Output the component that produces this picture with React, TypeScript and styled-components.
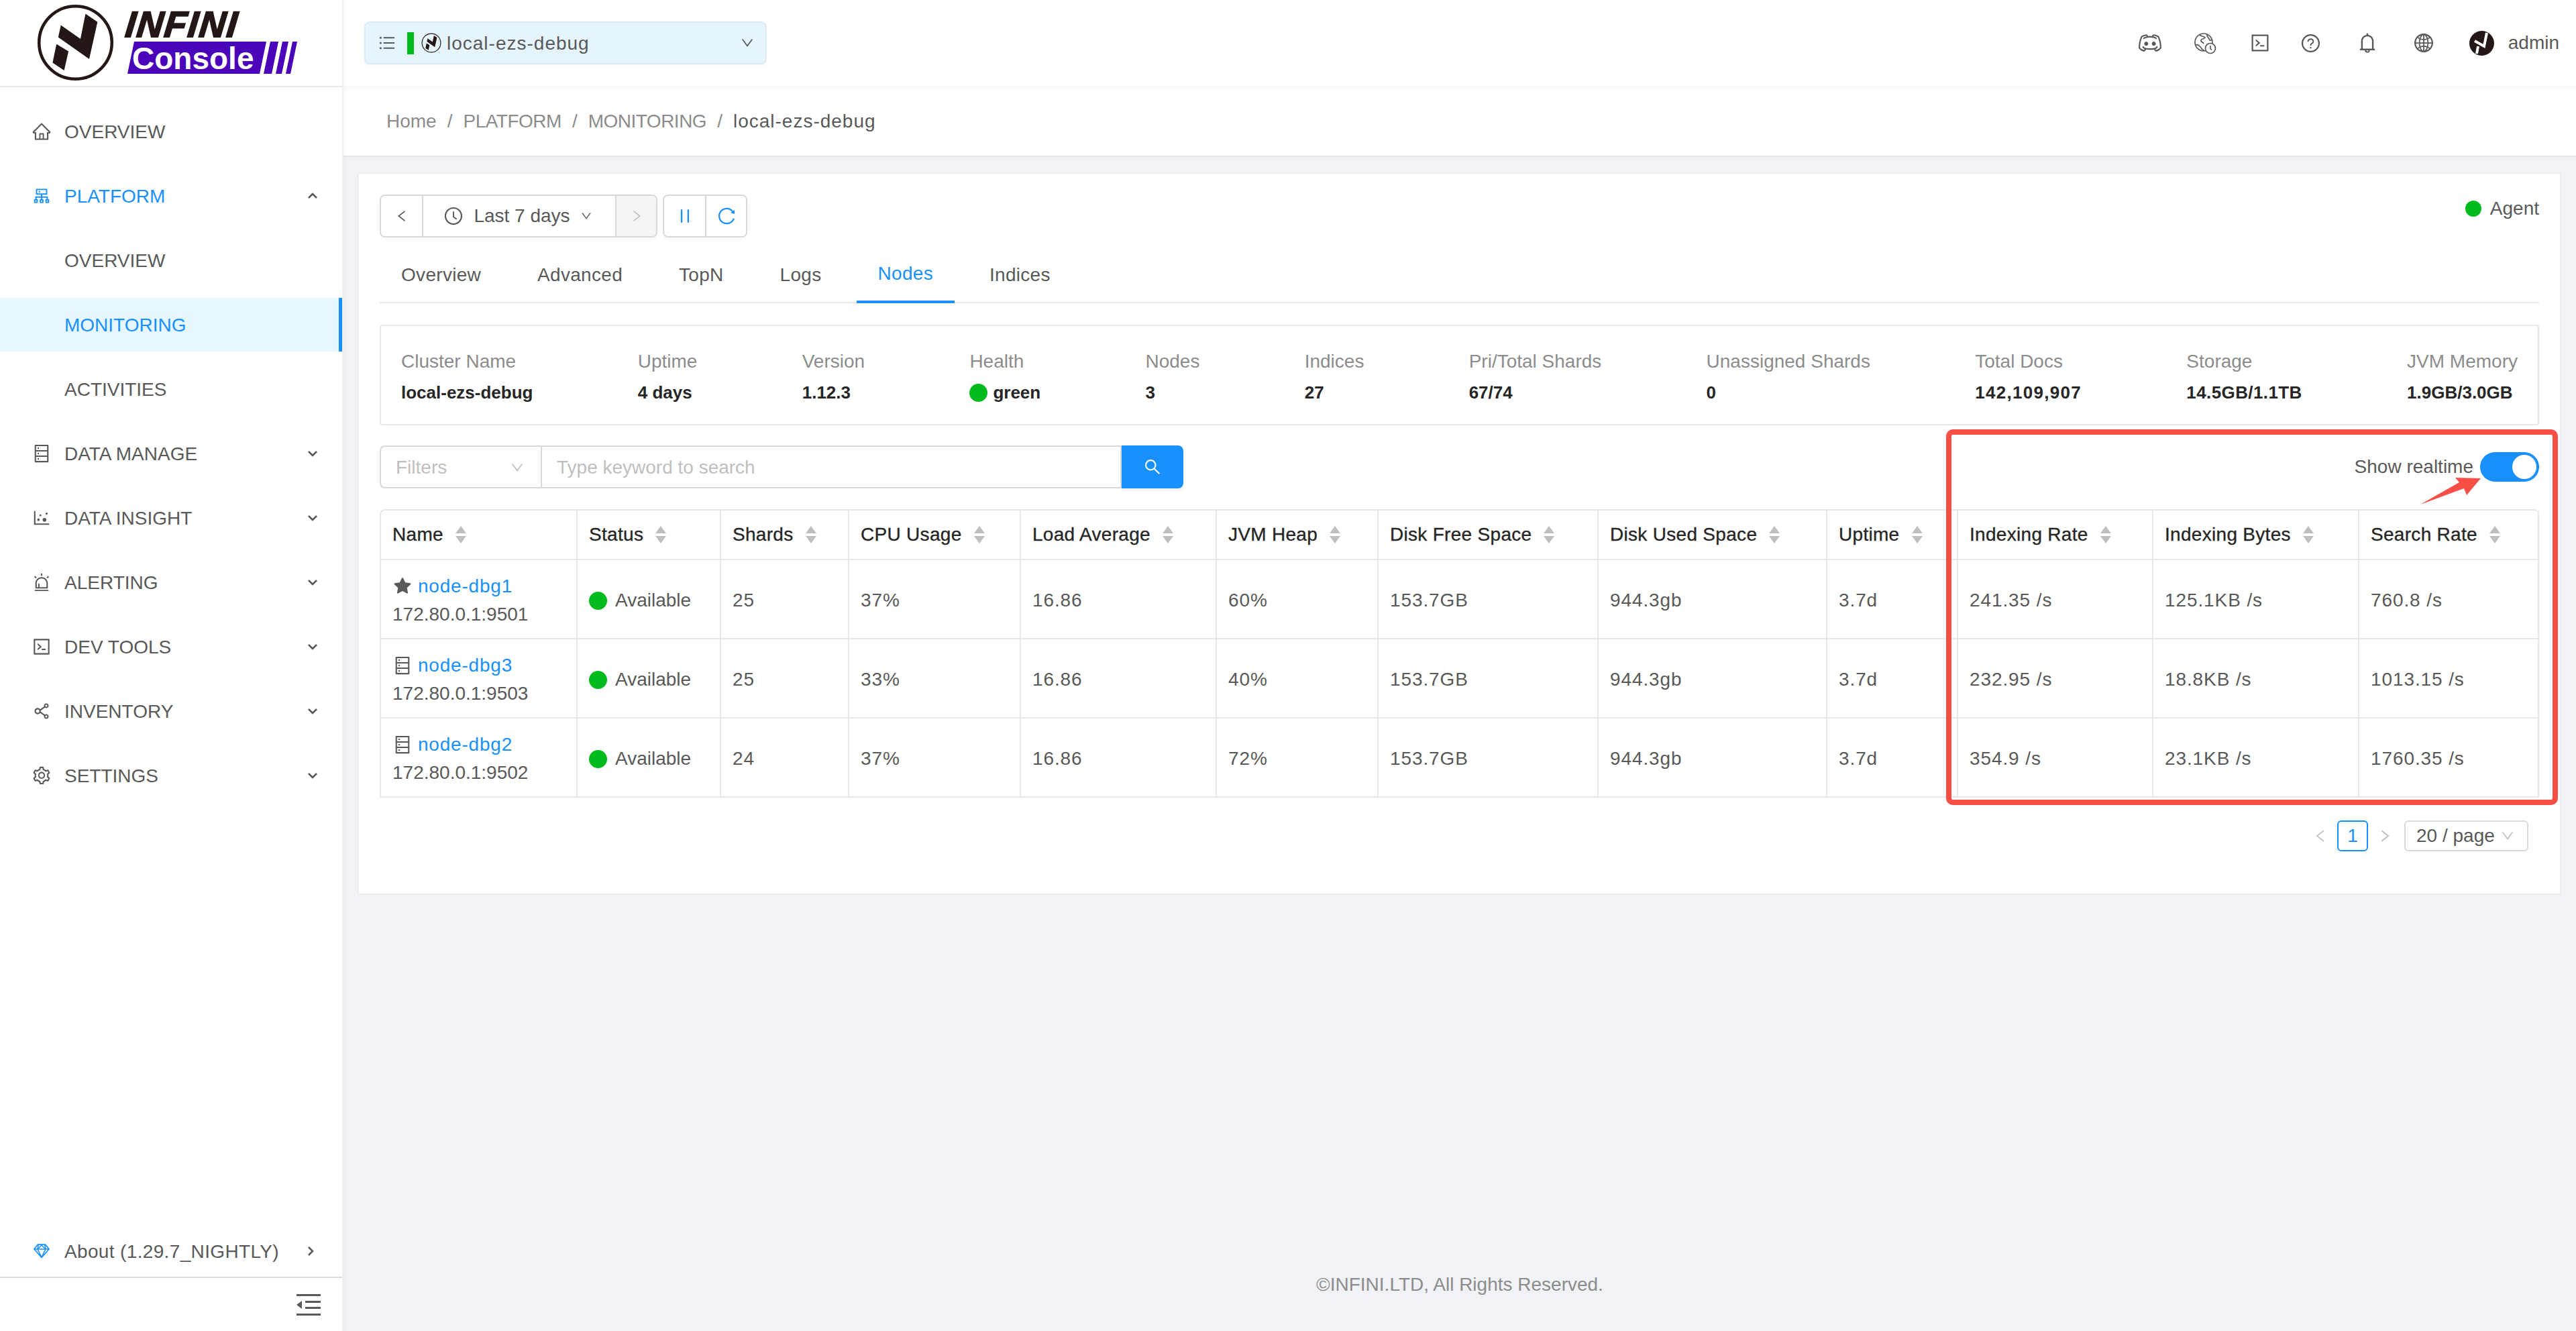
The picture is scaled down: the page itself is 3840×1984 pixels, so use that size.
import React from "react";
import styled, { createGlobalStyle } from "styled-components";
import {
  AiFillStar,
  AiOutlineAlert,
  AiOutlineBell,
  AiOutlineClockCircle,
  AiOutlineCluster,
  AiOutlineCode,
  AiOutlineDatabase,
  AiOutlineDotChart,
  AiOutlineDown,
  AiOutlineGlobal,
  AiOutlineHome,
  AiOutlineLeft,
  AiOutlinePause,
  AiOutlineQuestionCircle,
  AiOutlineReload,
  AiOutlineRight,
  AiOutlineSearch,
  AiOutlineSetting,
  AiOutlineShareAlt,
  AiOutlineSketch,
  AiOutlineUnorderedList,
} from "react-icons/ai";
import { RxDiscordLogo } from "react-icons/rx";

const GlobalStyle = createGlobalStyle`
  html, body {
    margin: 0;
    padding: 0;
    background: #f0f2f5;
  }
  body {
    font-family: "Liberation Sans", Arial, sans-serif;
    font-size: 28px;
    line-height: 42px;
    color: #595959;
  }
  * {
    box-sizing: border-box;
  }
`;

const Page = styled.div`
  display: flex;
  width: 3840px;
  height: 1984px;
  overflow: hidden;
`;

const Sidebar = styled.aside`
  display: flex;
  flex-direction: column;
  flex: 0 0 512px;
  background: #fff;
  border-right: 2px solid #f0f0f0;
  box-shadow: 2px 0 6px rgba(0, 21, 41, 0.035);
  z-index: 2;
`;

const LogoBar = styled.div`
  display: flex;
  gap: 15px;
  height: 130px;
  padding: 5px 0 0 54px;
  border-bottom: 2px solid #e8e8e8;
`;

const LogoWords = styled.div`
  display: flex;
  flex-direction: column;
`;

const LogoInfini = styled.div`
  height: 54px;
  margin-left: 2px;
  padding-top: 4px;
  font-size: 54px;
  line-height: 54px;
  font-weight: 700;
  font-style: italic;
  letter-spacing: 2px;
  color: #231815;
  -webkit-text-stroke: 2px #231815;
  transform: skewX(-6deg);
`;

const LogoBand = styled.div`
  display: flex;
  align-items: center;
  gap: 6px;
  height: 48px;
  margin: 3px 0 0 4px;
`;

const ConsoleWord = styled.div`
  flex: none;
  width: 207px;
  height: 48px;
  padding-left: 7px;
  background: #4a03b9;
  color: #fff;
  font-size: 46px;
  line-height: 50px;
  font-weight: 700;
  clip-path: polygon(10px 0, 100% 0, 197px 100%, 0 100%);
`;

const Stripe = styled.span<{ $w: number }>`
  display: block;
  flex: none;
  width: ${(p) => p.$w + 10}px;
  height: 48px;
  margin-left: -10px;
  background: #4a03b9;
  clip-path: polygon(10px 0, 100% 0, calc(100% - 10px) 100%, 0 100%);
`;

const Menu = styled.nav`
  flex: 1;
  padding-top: 26px;
`;

const MenuRow = styled.a<{ $active?: boolean; $open?: boolean; $sub?: boolean }>`
  display: flex;
  align-items: center;
  height: 80px;
  margin-bottom: 16px;
  padding-left: ${(p) => (p.$sub ? "96px" : "47px")};
  padding-right: 37px;
  gap: 19px;
  color: ${(p) => (p.$active || p.$open ? "#1890ff" : "#595959")};
  background: ${(p) => (p.$active ? "#e6f7ff" : "transparent")};
  border-right: ${(p) => (p.$active ? "5px solid #1890ff" : "none")};
  svg.menu-icon {
    flex: none;
    font-size: 30px;
  }
`;

const MenuLabel = styled.span`
  flex: 1;
  padding-top: 2px;
`;

const ArrowSvg = styled.svg<{ $dir: "up" | "down" | "right" }>`
  width: 14px;
  height: 14px;
  flex: none;
  fill: none;
  stroke: #595959;
  stroke-width: 2.6;
  transform: rotate(
    ${(p) => (p.$dir === "up" ? 180 : p.$dir === "right" ? -90 : 0)}deg
  );
`;

const AboutRow = styled.div`
  display: flex;
  align-items: center;
  gap: 19px;
  height: 78px;
  padding: 0 40px 0 47px;
  border-bottom: 2px solid #d9d9d9;
  letter-spacing: 0.35px;
  svg.about-icon {
    flex: none;
    font-size: 30px;
    color: #1890ff;
  }
`;

const CollapseRow = styled.div`
  display: flex;
  align-items: center;
  justify-content: flex-end;
  height: 79px;
  padding-right: 32px;
`;

const Content = styled.div`
  display: flex;
  flex-direction: column;
  flex: 1;
  min-width: 0;
`;

const TopBar = styled.header`
  display: flex;
  align-items: center;
  justify-content: space-between;
  height: 128px;
  padding: 0 25px 0 31px;
  background: #fff;
  box-shadow: 0 2px 8px rgba(0, 0, 0, 0.05);
  z-index: 1;
`;

const ClusterSelect = styled.div`
  display: flex;
  align-items: center;
  width: 600px;
  height: 64px;
  padding: 0 16px 0 18px;
  background: #e6f4fd;
  border: 2px solid #dcecf7;
  border-radius: 8px;
  box-shadow: 0 4px 0 rgba(0, 0, 0, 0.015);
  svg.list-icon {
    font-size: 28px;
    flex: none;
  }
`;

const HealthBar = styled.span`
  width: 10px;
  height: 33px;
  margin: 0 11px 0 16px;
  background: #00bb1b;
  flex: none;
`;

const SelectLabel = styled.span`
  flex: 1;
  margin-left: 8px;
  padding-top: 2px;
  letter-spacing: 1px;
`;

const TopActions = styled.div`
  display: flex;
  align-items: center;
  color: #595959;
`;

const TopIcon = styled.span<{ $w: number; $size: number }>`
  display: flex;
  align-items: center;
  justify-content: center;
  width: ${(p) => p.$w}px;
  font-size: ${(p) => p.$size}px;
`;

const UserName = styled.span`
  margin-left: 21px;
`;

const AvatarSvg = styled.svg`
  display: block;
  width: 37px;
  height: 37px;
  margin-left: 33px;
`;

const Breadcrumb = styled.div`
  display: flex;
  align-items: center;
  height: 106px;
  padding-left: 64px;
  padding-top: 2px;
  background: #fff;
  border-bottom: 2px solid #e8e8e8;
  color: #8c8c8c;
`;

const CrumbCaps = styled.span`
  letter-spacing: -0.5px;
`;

const CrumbSep = styled.span`
  margin: 0 16px;
`;

const CrumbCurrent = styled.span`
  color: #595959;
  letter-spacing: 1px;
`;

const Main = styled.main`
  flex: 1;
  padding: 23px 22px 0 21px;
`;

const Card = styled.section`
  position: relative;
  height: 1077px;
  padding: 31px 31px 0;
  background: #fff;
  border: 2px solid #ebedf0;
  border-radius: 4px;
`;

const ToolRow = styled.div`
  display: flex;
  justify-content: space-between;
  height: 64px;
`;

const ToolGroups = styled.div`
  display: flex;
  gap: 8px;
`;

const BtnGroup = styled.div`
  display: flex;
  border: 2px solid #d9d9d9;
  border-radius: 8px;
  overflow: hidden;
  box-shadow: 0 4px 0 rgba(0, 0, 0, 0.015);
`;

const ToolBtn = styled.div<{ $w: number; $muted?: boolean; $blue?: boolean }>`
  display: flex;
  align-items: center;
  justify-content: center;
  width: ${(p) => p.$w}px;
  background: ${(p) => (p.$muted ? "#f5f5f5" : "#fff")};
  color: ${(p) => (p.$muted ? "#bfbfbf" : p.$blue ? "#1890ff" : "#595959")};
  font-size: ${(p) => (p.$blue ? 30 : 22)}px;
  & + & {
    border-left: 2px solid #d9d9d9;
  }
`;

const TimeBtn = styled(ToolBtn)`
  gap: 15px;
  padding-right: 4px;
  font-size: 28px;
`;

const AgentBadge = styled.div`
  display: flex;
  align-items: center;
  gap: 13px;
  height: 42px;
`;

const Dot = styled.span<{ $size: number }>`
  display: inline-block;
  flex: none;
  width: ${(p) => p.$size}px;
  height: ${(p) => p.$size}px;
  border-radius: 50%;
  background: #00bb1b;
`;

const TabBar = styled.div`
  display: flex;
  height: 86px;
  margin: 12px 0 32px;
  border-bottom: 2px solid #e8e8e8;
`;

const Tab = styled.div<{ $active?: boolean }>`
  display: flex;
  align-items: center;
  height: 86px;
  padding: 2px 32px 0;
  margin-right: 20px;
  letter-spacing: 0.3px;
  color: ${(p) => (p.$active ? "#1890ff" : "#595959")};
  border-bottom: ${(p) => (p.$active ? "4px solid #1890ff" : "none")};
`;

const SummaryBox = styled.div`
  display: flex;
  justify-content: space-between;
  height: 150px;
  padding: 32px 30px 0;
  border: 2px solid #e8e8e8;
  border-radius: 4px;
`;

const SummaryLabel = styled.div`
  color: #8c8c8c;
`;

const SummaryValue = styled.div<{ $spacing?: number }>`
  display: flex;
  align-items: center;
  gap: 8px;
  height: 42px;
  margin-top: 4px;
  font-size: 26px;
  font-weight: 700;
  letter-spacing: ${(p) => p.$spacing ?? 0}px;
  color: #262626;
`;

const FilterRow = styled.div`
  display: flex;
  justify-content: space-between;
  height: 64px;
  margin: 30px 0 31px;
`;

const SearchGroup = styled.div`
  display: flex;
  width: 1198px;
`;

const FilterSelect = styled.div`
  display: flex;
  align-items: center;
  justify-content: space-between;
  width: 240px;
  padding: 2px 24px 0 22px;
  border: 2px solid #d9d9d9;
  border-right: none;
  border-radius: 8px 0 0 8px;
  color: #bfbfbf;
  font-size: 28px;
  svg {
    font-size: 22px;
  }
`;

const SearchInput = styled.div`
  flex: 1;
  display: flex;
  align-items: center;
  padding: 2px 22px 0;
  border: 2px solid #d9d9d9;
  color: #bfbfbf;
`;

const SearchBtn = styled.div`
  display: flex;
  align-items: center;
  justify-content: center;
  width: 92px;
  background: #1890ff;
  color: #fff;
  font-size: 28px;
  border-radius: 0 8px 8px 0;
  box-shadow: 0 4px 0 rgba(0, 0, 0, 0.045);
`;

const RealtimeWrap = styled.div`
  display: flex;
  align-items: center;
  gap: 10px;
`;

const Toggle = styled.div`
  display: flex;
  justify-content: flex-end;
  align-items: center;
  width: 88px;
  height: 44px;
  padding: 0 4px;
  border-radius: 22px;
  background: #1890ff;
`;

const ToggleKnob = styled.span`
  width: 36px;
  height: 36px;
  border-radius: 50%;
  background: #fff;
`;

const TableWrap = styled.div`
  border-top: 2px solid #e8e8e8;
  border-left: 2px solid #e8e8e8;
  border-radius: 8px 8px 0 0;
`;

const Table = styled.table`
  width: 3217px;
  table-layout: fixed;
  border-collapse: separate;
  border-spacing: 0;
`;

const ColWidth = styled.col<{ $w: number }>`
  width: ${(p) => p.$w}px;
`;

const HeadCell = styled.th`
  height: 74px;
  padding: 0 0 0 17px;
  text-align: left;
  font-weight: 400;
  letter-spacing: 0.3px;
  color: #262626;
  -webkit-text-stroke: 0.35px #262626;
  border-right: 2px solid #e8e8e8;
  border-bottom: 2px solid #e8e8e8;
`;

const HeadInner = styled.div`
  display: flex;
  align-items: center;
  gap: 18px;
  white-space: nowrap;
`;

const SortCarets = styled.span`
  display: flex;
  flex-direction: column;
  gap: 4px;
  -webkit-text-stroke: 0;
`;

const CaretUp = styled.i`
  display: block;
  border-left: 8px solid transparent;
  border-right: 8px solid transparent;
  border-bottom: 11px solid #bfbfbf;
`;

const CaretDown = styled.i`
  display: block;
  border-left: 8px solid transparent;
  border-right: 8px solid transparent;
  border-top: 11px solid #bfbfbf;
`;

const BodyCell = styled.td`
  height: 118px;
  padding: 4px 0 0 17px;
  border-right: 2px solid #e8e8e8;
  border-bottom: 2px solid #e8e8e8;
  white-space: nowrap;
`;

const NumberCell = styled(BodyCell)`
  letter-spacing: 0.9px;
`;

const NodeLine = styled.div`
  display: flex;
  align-items: center;
  font-size: 28px;
`;

const NodeIconSlot = styled.span`
  display: flex;
  width: 38px;
  font-size: 30px;
  color: #595959;
`;

const NodeLink = styled.a`
  color: #1890ff;
  letter-spacing: 0.8px;
`;

const StatusCell = styled.div`
  display: flex;
  align-items: center;
  gap: 12px;
`;

const Pager = styled.div`
  display: flex;
  align-items: center;
  justify-content: flex-end;
  height: 46px;
  margin-top: 34px;
  padding-right: 16px;
`;

const PagerArrow = styled.span`
  display: flex;
  justify-content: center;
  width: 50px;
  font-size: 24px;
  color: #bfbfbf;
`;

const PagerCurrent = styled.span`
  display: flex;
  align-items: center;
  justify-content: center;
  width: 46px;
  height: 46px;
  border: 2px solid #1890ff;
  border-radius: 6px;
  color: #1890ff;
`;

const PagerSize = styled.div`
  display: flex;
  align-items: center;
  justify-content: space-between;
  width: 185px;
  height: 46px;
  margin-left: 4px;
  padding: 0 18px 0 16px;
  border: 2px solid #d9d9d9;
  border-radius: 6px;
  svg {
    font-size: 22px;
    color: #bfbfbf;
  }
`;

const Annotation = styled.div`
  position: absolute;
  left: 2366px;
  top: 381px;
  width: 912px;
  height: 560px;
  border: 8px solid #f74e46;
  border-radius: 10px;
  pointer-events: none;
`;

const AnnotationArrow = styled.svg`
  position: absolute;
  left: 3073px;
  top: 452px;
  width: 92px;
  height: 44px;
  fill: #f74e46;
`;

const Footer = styled.footer`
  height: 140px;
  padding-top: 50px;
  text-align: center;
  font-size: 28px;
  color: #8c8c8c;
`;

function MenuArrow({ dir }: { dir: "up" | "down" | "right" }) {
  return (
    <ArrowSvg $dir={dir} viewBox="0 0 14 14">
      <path d="M1 4 L7 10 L13 4" />
    </ArrowSvg>
  );
}

// the N of the logo, ring and two slanted bars
function LogoMark({ size }: { size: number }) {
  return (
    <svg width={size} height={size} viewBox="0 0 360 360" style={{ flex: "none", display: "block" }}>
      <circle cx="180" cy="180" r="167" fill="none" stroke="#231815" strokeWidth="14" />
      <path fill="#231815" d="M113 100 L203 163 L226 48 L281 85 L243 255 L101 155 Z" />
      <path fill="#231815" d="M93 187 L148 220 L128 308 L75 272 Z" />
    </svg>
  );
}

function GlobeClock() {
  return (
    <svg width="34" height="34" viewBox="0 0 34 34" fill="none" stroke="#595959" strokeWidth="1.7">
      <circle cx="15" cy="16" r="13" />
      <path d="M9 5 C11 8 15 6 17 9 C15 12 12 10 11 13 C10 16 14 15 15 18 M3 20 C7 18 9 22 11 24 C12 27 15 27 16 29 M20 4 C19 8 23 9 24 13 C26 14 27 12 28 13" />
      <circle cx="25" cy="25" r="7.5" fill="#fff" />
      <path d="M25 21 V25.5 L27 27.5" />
    </svg>
  );
}

function CollapseIcon() {
  return (
    <svg width="36" height="32" viewBox="0 0 36 32" fill="#595959">
      <rect x="0" y="0" width="36" height="3" />
      <rect x="13" y="10" width="23" height="3" />
      <rect x="13" y="19" width="23" height="3" />
      <rect x="0" y="29" width="36" height="3" />
      <path d="M8 10 V22 L0 16 Z" />
    </svg>
  );
}

function Avatar() {
  return (
    <AvatarSvg viewBox="0 0 37 37">
      <circle cx="18.5" cy="18.5" r="18.5" fill="#231815" />
      <path
        fill="none"
        stroke="#fff"
        strokeWidth="4"
        d="M26 3 L22 23 L8 15 M13 23 L11 34"
      />
    </AvatarSvg>
  );
}

const sideItems = [
  { label: "OVERVIEW", icon: AiOutlineHome },
  { label: "PLATFORM", icon: AiOutlineCluster, open: true },
  { label: "OVERVIEW", sub: true },
  { label: "MONITORING", sub: true, active: true },
  { label: "ACTIVITIES", sub: true },
  { label: "DATA MANAGE", icon: AiOutlineDatabase, arrow: true },
  { label: "DATA INSIGHT", icon: AiOutlineDotChart, arrow: true },
  { label: "ALERTING", icon: AiOutlineAlert, arrow: true },
  { label: "DEV TOOLS", icon: AiOutlineCode, arrow: true },
  { label: "INVENTORY", icon: AiOutlineShareAlt, arrow: true },
  { label: "SETTINGS", icon: AiOutlineSetting, arrow: true },
];

const summary = [
  { label: "Cluster Name", value: "local-ezs-debug" },
  { label: "Uptime", value: "4 days" },
  { label: "Version", value: "1.12.3" },
  { label: "Health", value: "green" },
  { label: "Nodes", value: "3" },
  { label: "Indices", value: "27" },
  { label: "Pri/Total Shards", value: "67/74" },
  { label: "Unassigned Shards", value: "0" },
  { label: "Total Docs", value: "142,109,907", spacing: 1.3 },
  { label: "Storage", value: "14.5GB/1.1TB", spacing: 0.4 },
  { label: "JVM Memory", value: "1.9GB/3.0GB" },
];

const columns = [
  { title: "Name", width: 293 },
  { title: "Status", width: 214 },
  { title: "Shards", width: 191 },
  { title: "CPU Usage", width: 256 },
  { title: "Load Average", width: 292 },
  { title: "JVM Heap", width: 241 },
  { title: "Disk Free Space", width: 328 },
  { title: "Disk Used Space", width: 341 },
  { title: "Uptime", width: 195 },
  { title: "Indexing Rate", width: 291 },
  { title: "Indexing Bytes", width: 307 },
  { title: "Search Rate", width: 268 },
];

const nodes = [
  {
    name: "node-dbg1",
    addr: "172.80.0.1:9501",
    master: true,
    cells: ["25", "37%", "16.86", "60%", "153.7GB", "944.3gb", "3.7d", "241.35 /s", "125.1KB /s", "760.8 /s"],
  },
  {
    name: "node-dbg3",
    addr: "172.80.0.1:9503",
    cells: ["25", "33%", "16.86", "40%", "153.7GB", "944.3gb", "3.7d", "232.95 /s", "18.8KB /s", "1013.15 /s"],
  },
  {
    name: "node-dbg2",
    addr: "172.80.0.1:9502",
    cells: ["24", "37%", "16.86", "72%", "153.7GB", "944.3gb", "3.7d", "354.9 /s", "23.1KB /s", "1760.35 /s"],
  },
];

export default function App() {
  return (
    <Page>
      <GlobalStyle />
      <Sidebar>
        <LogoBar>
          <LogoMark size={117} />
          <LogoWords>
            <LogoInfini>INFINI</LogoInfini>
            <LogoBand>
              <ConsoleWord>Console</ConsoleWord>
              <Stripe $w={12} />
              <Stripe $w={9} />
              <Stripe $w={7} />
            </LogoBand>
          </LogoWords>
        </LogoBar>
        <Menu>
          {sideItems.map((item, index) => {
            const Icon = item.icon;
            return (
              <MenuRow key={index} $active={item.active} $open={item.open} $sub={item.sub}>
                {Icon && <Icon className="menu-icon" />}
                <MenuLabel>{item.label}</MenuLabel>
                {item.open && <MenuArrow dir="up" />}
                {item.arrow && <MenuArrow dir="down" />}
              </MenuRow>
            );
          })}
        </Menu>
        <AboutRow>
          <AiOutlineSketch className="about-icon" />
          <MenuLabel>About (1.29.7_NIGHTLY)</MenuLabel>
          <MenuArrow dir="right" />
        </AboutRow>
        <CollapseRow>
          <CollapseIcon />
        </CollapseRow>
      </Sidebar>

      <Content>
        <TopBar>
          <ClusterSelect>
            <AiOutlineUnorderedList className="list-icon" />
            <HealthBar />
            <LogoMark size={30} />
            <SelectLabel>local-ezs-debug</SelectLabel>
            <AiOutlineDown size={22} />
          </ClusterSelect>
          <TopActions>
            <TopIcon $w={82} $size={34}><RxDiscordLogo /></TopIcon>
            <TopIcon $w={82} $size={34}><GlobeClock /></TopIcon>
            <TopIcon $w={82} $size={32}><AiOutlineCode /></TopIcon>
            <TopIcon $w={70} $size={31}><AiOutlineQuestionCircle /></TopIcon>
            <TopIcon $w={98} $size={34}><AiOutlineBell /></TopIcon>
            <TopIcon $w={70} $size={32}><AiOutlineGlobal /></TopIcon>
            <Avatar />
            <UserName>admin</UserName>
          </TopActions>
        </TopBar>

        <Breadcrumb>
          <span>Home</span>
          <CrumbSep>/</CrumbSep>
          <CrumbCaps>PLATFORM</CrumbCaps>
          <CrumbSep>/</CrumbSep>
          <CrumbCaps>MONITORING</CrumbCaps>
          <CrumbSep>/</CrumbSep>
          <CrumbCurrent>local-ezs-debug</CrumbCurrent>
        </Breadcrumb>

        <Main>
          <Card>
            <ToolRow>
              <ToolGroups>
                <BtnGroup>
                  <ToolBtn $w={61}><AiOutlineLeft /></ToolBtn>
                  <TimeBtn $w={288}>
                    <AiOutlineClockCircle size={30} />
                    Last 7 days
                    <AiOutlineDown size={18} />
                  </TimeBtn>
                  <ToolBtn $w={61} $muted><AiOutlineRight /></ToolBtn>
                </BtnGroup>
                <BtnGroup>
                  <ToolBtn $w={61} $blue><AiOutlinePause /></ToolBtn>
                  <ToolBtn $w={61} $blue><AiOutlineReload /></ToolBtn>
                </BtnGroup>
              </ToolGroups>
              <AgentBadge>
                <Dot $size={24} />
                Agent
              </AgentBadge>
            </ToolRow>

            <TabBar>
              <Tab>Overview</Tab>
              <Tab>Advanced</Tab>
              <Tab>TopN</Tab>
              <Tab>Logs</Tab>
              <Tab $active>Nodes</Tab>
              <Tab>Indices</Tab>
            </TabBar>

            <SummaryBox>
              {summary.map((item) => (
                <div key={item.label}>
                  <SummaryLabel>{item.label}</SummaryLabel>
                  <SummaryValue $spacing={item.spacing}>
                    {item.label === "Health" && <Dot $size={27} />}
                    {item.value}
                  </SummaryValue>
                </div>
              ))}
            </SummaryBox>

            <FilterRow>
              <SearchGroup>
                <FilterSelect>
                  Filters
                  <AiOutlineDown />
                </FilterSelect>
                <SearchInput>Type keyword to search</SearchInput>
                <SearchBtn><AiOutlineSearch /></SearchBtn>
              </SearchGroup>
              <RealtimeWrap>
                Show realtime
                <Toggle>
                  <ToggleKnob />
                </Toggle>
              </RealtimeWrap>
            </FilterRow>

            <TableWrap>
              <Table>
                <colgroup>
                  {columns.map((col) => (
                    <ColWidth key={col.title} $w={col.width} />
                  ))}
                </colgroup>
                <thead>
                  <tr>
                    {columns.map((col) => (
                      <HeadCell key={col.title}>
                        <HeadInner>
                          {col.title}
                          <SortCarets>
                            <CaretUp />
                            <CaretDown />
                          </SortCarets>
                        </HeadInner>
                      </HeadCell>
                    ))}
                  </tr>
                </thead>
                <tbody>
                  {nodes.map((node) => (
                    <tr key={node.name}>
                      <BodyCell>
                        <NodeLine>
                          <NodeIconSlot>
                            {node.master ? <AiFillStar /> : <AiOutlineDatabase />}
                          </NodeIconSlot>
                          <NodeLink>{node.name}</NodeLink>
                        </NodeLine>
                        <div>{node.addr}</div>
                      </BodyCell>
                      <BodyCell>
                        <StatusCell>
                          <Dot $size={27} />
                          Available
                        </StatusCell>
                      </BodyCell>
                      {node.cells.map((cell, index) => (
                        <NumberCell key={index}>{cell}</NumberCell>
                      ))}
                    </tr>
                  ))}
                </tbody>
              </Table>
            </TableWrap>

            <Pager>
              <PagerArrow><AiOutlineLeft /></PagerArrow>
              <PagerCurrent>1</PagerCurrent>
              <PagerArrow><AiOutlineRight /></PagerArrow>
              <PagerSize>
                20 / page
                <AiOutlineDown />
              </PagerSize>
            </Pager>

            <Annotation />
            <AnnotationArrow viewBox="0 0 92 44">
              <path d="M0 41 L58 8 L52 1 L90 2 L69 27 L65 17 Z" />
            </AnnotationArrow>
          </Card>
        </Main>

        <Footer>©INFINI.LTD, All Rights Reserved.</Footer>
      </Content>
    </Page>
  );
}
